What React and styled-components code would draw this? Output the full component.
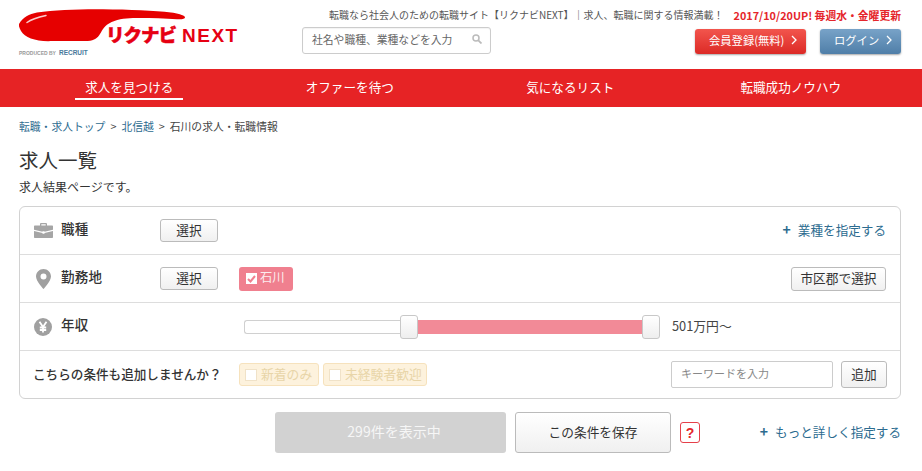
import React from "react";
import styled, { createGlobalStyle } from "styled-components";

const GlobalStyle = createGlobalStyle`
  html, body {
    margin: 0;
    padding: 0;
    background: #fff;
    font-family: "Noto Sans CJK JP", "Noto Sans", sans-serif;
    color: #333;
  }
  * { box-sizing: border-box; }
`;

const Page = styled.div`
  width: 922px;
  height: 471px;
  overflow: hidden;
`;

const Header = styled.header`
  height: 69px;
  display: flex;
  justify-content: space-between;
  padding: 9px 21px 0 19px;
`;

const Logo = styled.div`
  width: 220px;
  display: flex;
  flex-direction: column;
`;

const LogoTop = styled.div`
  position: relative;
  height: 37px;
`;

const LogoMark = styled.svg`
  display: block;
`;

const LogoWord = styled.div`
  position: absolute;
  left: 87px;
  top: 13px;
  display: flex;
  align-items: baseline;
  white-space: nowrap;
  color: #e60012;
  font-weight: 900;
  line-height: 24px;
`;

const LogoKana = styled.span`
  font-size: 18.5px;
  letter-spacing: -1px;
  -webkit-text-stroke: 0.5px #e60012;
`;

const LogoLatin = styled.span`
  font-family: "Liberation Sans", sans-serif;
  font-size: 19px;
  font-weight: 700;
  letter-spacing: 1.5px;
  margin-left: 6px;
`;

const Produced = styled.div`
  margin-top: 3px;
  font-family: "Liberation Sans", sans-serif;
  font-size: 5px;
  line-height: 8px;
  font-weight: 700;
  color: #999;
  white-space: nowrap;
  display: flex;
  gap: 3px;
`;

const RecruitMark = styled.span`
  color: #4a7a9c;
  font-size: 6.5px;
`;

const HeaderRight = styled.div`
  width: 599px;
  display: flex;
  flex-direction: column;
`;

const Tagline = styled.div`
  display: flex;
  justify-content: flex-end;
  gap: 10px;
  font-size: 10px;
  line-height: 12px;
  color: #555;
  white-space: nowrap;
`;

const UpdateNote = styled.span`
  color: #e5262b;
  font-weight: 700;
  font-size: 10.8px;
`;

const HeaderTools = styled.div`
  display: flex;
  align-items: flex-start;
  margin-top: 6px;
`;

const SearchBox = styled.div`
  width: 189px;
  height: 27px;
  border: 1px solid #ccc;
  border-radius: 3px;
  display: flex;
  align-items: center;
  justify-content: space-between;
  padding: 0 8px 3px 9px;
  font-size: 10.8px;
  color: #666;
  box-shadow: inset 0 1px 1px rgba(0, 0, 0, 0.05);
`;

const HeaderButton = styled.div`
  height: 25px;
  margin-top: 2px;
  margin-left: ${(p) => p.$gap}px;
  width: ${(p) => p.$width}px;
  border-radius: 3px;
  display: flex;
  align-items: center;
  gap: 7px;
  padding: 0 0 3px 14px;
  color: #fff;
  font-size: 11.3px;
  background: ${(p) =>
    p.$blue
      ? "linear-gradient(#78a3c8, #4f7ea8)"
      : "linear-gradient(#f2554d, #dc2a26)"};
  box-shadow: 0 1px 2px rgba(0, 0, 0, 0.35);
  white-space: nowrap;
`;

const Nav = styled.nav`
  height: 38px;
  background: #e62325;
  padding: 0 21px 0 19px;
  display: grid;
  grid-template-columns: repeat(4, 1fr);
`;

const NavCell = styled.div`
  display: flex;
  justify-content: center;
`;

const NavItem = styled.div`
  height: 31px;
  padding: 0 10px;
  border-bottom: ${(p) => (p.$active ? "2px solid #fff" : "none")};
  color: #fff;
  font-size: 12.6px;
  line-height: 36px;
  white-space: nowrap;
`;

const Breadcrumb = styled.div`
  padding: 11px 19px 0;
  font-size: 10.8px;
  line-height: 16px;
  color: #444;
  display: flex;
  gap: 5px;
`;

const Crumb = styled.span`
  color: #2c6b8f;
`;

const Title = styled.h1`
  margin: 14px 19px 0;
  font-size: 19.5px;
  line-height: 24px;
  font-weight: 400;
  color: #333;
`;

const Lead = styled.p`
  margin: 7px 19px 0;
  font-size: 12px;
  line-height: 16px;
`;

const Panel = styled.section`
  margin: 11px 21px 0 19px;
  height: 193px;
  border: 1px solid #d2d2d2;
  border-radius: 6px;
`;

const Row = styled.div`
  height: ${(p) => p.$height}px;
  display: flex;
  align-items: center;
  padding: 0 ${(p) => p.$right || 14}px 0 13px;
  border-top: ${(p) => (p.$first ? "none" : "1px solid #ddd")};
`;

const IconSlot = styled.div`
  width: 20px;
  height: 20px;
  margin-right: 8px;
  display: flex;
  align-items: center;
  justify-content: center;
`;

const Label = styled.div`
  width: 99px;
  margin-bottom: 6px;
  font-size: 13.5px;
  font-weight: 500;
  letter-spacing: 0.3px;
  color: #333;
`;

const Button = styled.div`
  width: ${(p) => p.$width}px;
  height: ${(p) => p.$height}px;
  flex: none;
  border: 1px solid #bbb;
  border-radius: 3px;
  background: linear-gradient(#fff, #f0f0f0);
  display: flex;
  align-items: center;
  justify-content: center;
  padding-bottom: 2px;
  font-size: 12.7px;
  color: #333;
  white-space: nowrap;
`;

const Spacer = styled.div`
  flex: 1;
`;

const TextLink = styled.div`
  padding-bottom: 3px;
  font-size: 12.6px;
  color: #2c6b8f;
  white-space: nowrap;
  display: flex;
  align-items: center;
  gap: 7px;
`;

const Plus = styled.span`
  font-size: 14px;
  font-weight: 700;
`;

const SelectedTag = styled.div`
  margin-left: 21px;
  width: 54px;
  height: 24px;
  border-radius: 3px;
  background: #f0808f;
  color: #fff;
  display: flex;
  align-items: center;
  gap: 3px;
  padding-left: 7px;
  font-size: 12.3px;
`;

const TagText = styled.span`
  margin-bottom: 4px;
  opacity: 0.85;
`;

const CheckBox = styled.span`
  width: 11px;
  height: 11px;
  flex: none;
  background: #fff;
  display: flex;
  align-items: center;
  justify-content: center;
`;

const Slider = styled.div`
  margin-left: 84px;
  display: flex;
  align-items: center;
`;

const Track = styled.div`
  width: ${(p) => p.$width}px;
  height: 14px;
  ${(p) =>
    p.$filled
      ? "background: #f28a97;"
      : "background: #fff; border: 1px solid #d0d0d0; border-right: none; border-radius: 3px 0 0 3px;"}
`;

const Handle = styled.div`
  width: 18px;
  height: 24px;
  flex: none;
  border: 1px solid #c8c8c8;
  border-radius: 3px;
  background: linear-gradient(#fff, #eee);
`;

const SalaryValue = styled.div`
  margin-left: 12px;
  padding-bottom: 3px;
  font-size: 12.8px;
  color: #444;
`;

const AddQuestion = styled.div`
  width: 206px;
  padding-bottom: 3px;
  font-size: 12.6px;
  font-weight: 500;
  color: #333;
  white-space: nowrap;
`;

const OptionTag = styled.div`
  height: 23px;
  width: ${(p) => p.$width}px;
  margin-right: 4px;
  border: 1px solid #f6e2bd;
  border-radius: 3px;
  background: #fdf2dd;
  display: flex;
  align-items: center;
  gap: 4px;
  padding: 0 0 3px 5px;
  font-size: 12.8px;
  color: #e8d5a8;
  white-space: nowrap;
`;

const OptionCheck = styled.span`
  width: 12px;
  height: 12px;
  margin-top: 4px;
  background: #fff;
  border: 1px solid #f0e2c8;
  flex: none;
`;

const KeywordInput = styled.div`
  width: 162px;
  height: 27px;
  border: 1px solid #ccc;
  border-radius: 2px;
  margin-right: 8px;
  display: flex;
  align-items: center;
  padding: 0 0 3px 9px;
  font-size: 11px;
  color: #888;
`;

const Actions = styled.div`
  margin-top: 13px;
  padding: 0 21px 0 275px;
  display: flex;
  align-items: center;
`;

const ShowButton = styled.div`
  width: 231px;
  height: 41px;
  background: #d2d2d2;
  border-radius: 3px;
  color: #f6f6f6;
  font-size: 14px;
  display: flex;
  align-items: center;
  justify-content: center;
  padding: 0 0 3px 7px;
  margin-right: 9px;
`;

const HelpBadge = styled.div`
  width: 20px;
  height: 21px;
  margin-left: 9px;
  border: 1.5px solid #e5404a;
  border-radius: 3px;
  color: #e5262b;
  font-family: "Liberation Sans", sans-serif;
  font-size: 14px;
  font-weight: 700;
  display: flex;
  align-items: center;
  justify-content: center;
`;

const Briefcase = () => (
  <svg width="19" height="15" viewBox="0 0 19 15">
    <path
      fill="#a5a5a5"
      d="M6 2.500V1.200C6 .5 6.500 0 7.200 0h4.600c.7 0 1.200.5 1.200 1.200v1.300h5c.6 0 1 .4 1 1V6.800l-8.500 2v-.6h-2v.6L0 6.800V3.500c0-.6.4-1 1-1h5zM7.300 1.300v1.200h4.400V1.300H7.300zM0 8l8.500 2v.8h2V10L19 8v6c0 .6-.4 1-1 1H1c-.6 0-1-.4-1-1V8z"
    />
  </svg>
);

const Pin = () => (
  <svg width="15" height="20" viewBox="0 0 15 20">
    <path
      fill="#a0a0a0"
      fillRule="evenodd"
      d="M7.500 0C3.400 0 0 3.300 0 7.400 0 12 7.500 20 7.500 20S15 12 15 7.400C15 3.300 11.600 0 7.500 0zm0 4.500a3 3 0 1 1 0 6 3 3 0 0 1 0-6z"
    />
  </svg>
);

const Yen = () => (
  <svg width="18" height="18" viewBox="0 0 18 18">
    <circle cx="9" cy="9" r="9" fill="#a0a0a0" />
    <path
      fill="none"
      stroke="#fff"
      strokeWidth="1.800"
      d="M5.500 3.800L9 9l3.500-5.200M9 9v5.500M5.800 9.500h6.400M5.800 12h6.400"
    />
  </svg>
);

const SearchIcon = () => (
  <svg width="10" height="10" viewBox="0 0 10 10">
    <circle cx="4" cy="4" r="3" fill="none" stroke="#bbb" strokeWidth="1.500" />
    <path d="M6.300 6.300L9.500 9.500" stroke="#bbb" strokeWidth="1.800" />
  </svg>
);

const Chevron = () => (
  <svg width="6" height="10" viewBox="0 0 6 10">
    <path d="M1 1l4 4-4 4" fill="none" stroke="#fff" strokeWidth="1.300" />
  </svg>
);

const Tick = () => (
  <svg width="9" height="8" viewBox="0 0 9 8">
    <path d="M1 4l2.500 2.500L8 1" fill="none" stroke="#f0808f" strokeWidth="2" />
  </svg>
);

const navItems = ["求人を見つける", "オファーを待つ", "気になるリスト", "転職成功ノウハウ"];

export default function App() {
  return (
    <Page>
      <GlobalStyle />
      <Header>
        <Logo>
          <LogoTop>
            <LogoMark width="170" height="35" viewBox="0 0 170 35">
              <path
                fill="#e60000"
                d="M0 15C4 8 10 5 18 3.500 36 .8 60 0 84 .2c26 .3 52 1.300 68 3.300 6 .8 13 2.500 14 4.500.3 2-3 2.500-8 2.200-14-.9-30-1.400-44-1.200-9 .2-17 1.500-24 5.500-6 3.500-7 8-10 12-2.500 3.500-6 5.500-14 5.500H34C18 33 6 29 2 22 .6 19.500-.5 17 0 15z"
              />
              <path
                fill="none"
                stroke="#fff"
                strokeOpacity="0.8"
                strokeWidth="1.500"
                strokeLinecap="round"
                d="M8 13.500C12 10.500 20 8 27 6.500"
              />
            </LogoMark>
            <LogoWord>
              <LogoKana>リクナビ</LogoKana>
              <LogoLatin>NEXT</LogoLatin>
            </LogoWord>
          </LogoTop>
          <Produced>
            <span>PRODUCED BY</span>
            <RecruitMark>RECRUIT</RecruitMark>
          </Produced>
        </Logo>
        <HeaderRight>
          <Tagline>
            <span>転職なら社会人のための転職サイト【リクナビNEXT】｜求人、転職に関する情報満載！</span>
            <UpdateNote>2017/10/20UP! 毎週水・金曜更新</UpdateNote>
          </Tagline>
          <HeaderTools>
            <SearchBox>
              社名や職種、業種などを入力
              <SearchIcon />
            </SearchBox>
            <HeaderButton $gap={204} $width={111}>
              会員登録(無料) <Chevron />
            </HeaderButton>
            <HeaderButton $gap={14} $width={81} $blue>
              ログイン <Chevron />
            </HeaderButton>
          </HeaderTools>
        </HeaderRight>
      </Header>

      <Nav>
        {navItems.map((item, i) => (
          <NavCell key={item}>
            <NavItem $active={i === 0}>{item}</NavItem>
          </NavCell>
        ))}
      </Nav>

      <Breadcrumb>
        <Crumb>転職・求人トップ</Crumb>
        <span>&gt;</span>
        <Crumb>北信越</Crumb>
        <span>&gt;</span>
        <span>石川の求人・転職情報</span>
      </Breadcrumb>

      <Title>求人一覧</Title>
      <Lead>求人結果ページです。</Lead>

      <Panel>
        <Row $first $height={47}>
          <IconSlot>
            <Briefcase />
          </IconSlot>
          <Label>職種</Label>
          <Button $width={58} $height={23}>選択</Button>
          <Spacer />
          <TextLink>
            <Plus>+</Plus>
            <span>業種を指定する</span>
          </TextLink>
        </Row>
        <Row $height={48}>
          <IconSlot>
            <Pin />
          </IconSlot>
          <Label>勤務地</Label>
          <Button $width={58} $height={23}>選択</Button>
          <SelectedTag>
            <CheckBox>
              <Tick />
            </CheckBox>
            <TagText>石川</TagText>
          </SelectedTag>
          <Spacer />
          <Button $width={95} $height={24}>市区郡で選択</Button>
        </Row>
        <Row $height={48}>
          <IconSlot>
            <Yen />
          </IconSlot>
          <Label>年収</Label>
          <Slider>
            <Track $width={156} />
            <Handle />
            <Track $width={224} $filled />
            <Handle />
          </Slider>
          <SalaryValue>501万円〜</SalaryValue>
        </Row>
        <Row $height={48} $right={13}>
          <AddQuestion>こちらの条件も追加しませんか？</AddQuestion>
          <OptionTag $width={80}>
            <OptionCheck />
            新着のみ
          </OptionTag>
          <OptionTag $width={104}>
            <OptionCheck />
            未経験者歓迎
          </OptionTag>
          <Spacer />
          <KeywordInput>キーワードを入力</KeywordInput>
          <Button $width={46} $height={27}>追加</Button>
        </Row>
      </Panel>

      <Actions>
        <ShowButton>299件を表示中</ShowButton>
        <Button $width={156} $height={41}>この条件を保存</Button>
        <HelpBadge>?</HelpBadge>
        <Spacer />
        <TextLink>
          <Plus>+</Plus>
          <span>もっと詳しく指定する</span>
        </TextLink>
      </Actions>
    </Page>
  );
}
